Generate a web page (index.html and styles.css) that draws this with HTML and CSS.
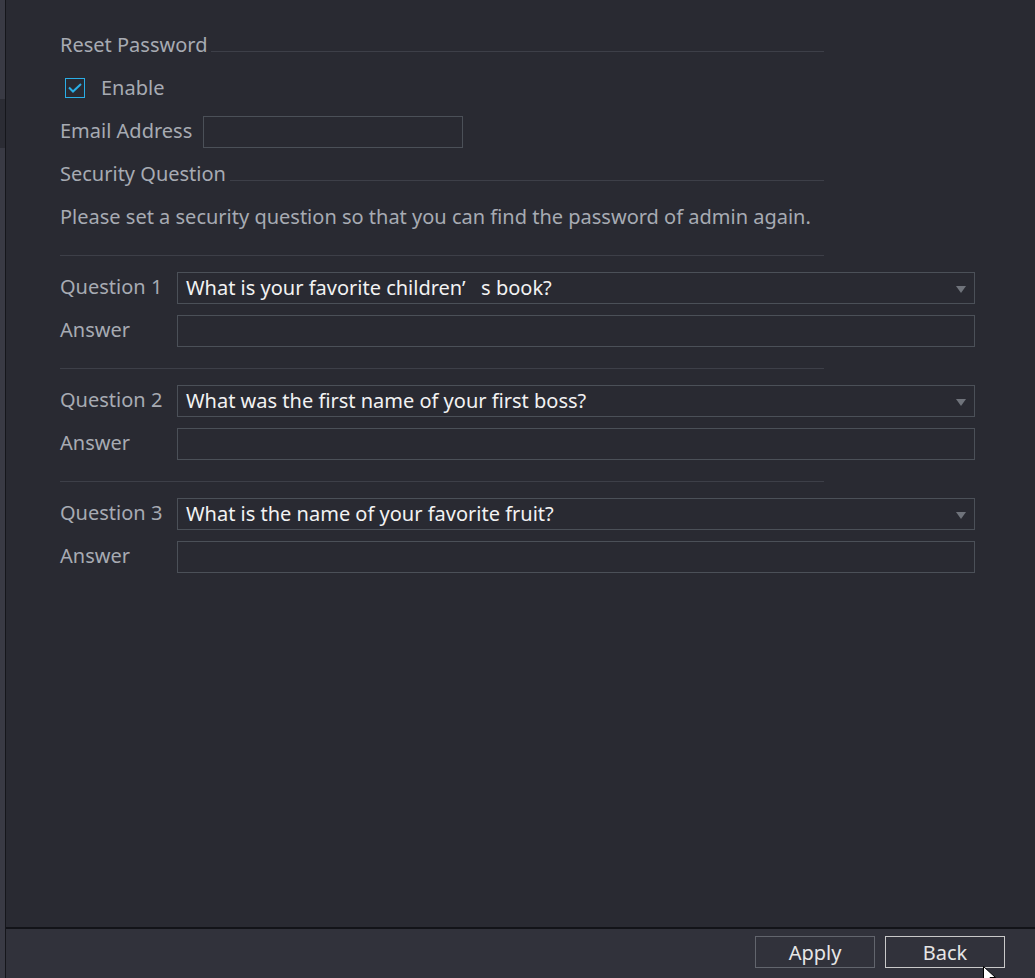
FILE: index.html
```
<!DOCTYPE html>
<html>
  <head>
    <title>Reset Password</title>
    <link rel="stylesheet" href="styles.css">
  </head>
  <body>
    <div class="screen">
      <div class="side-strip">
        <div class="strip-active"></div>
      </div>

      <div class="panel">
        <div class="content">
          <div class="section-title">
            <span>Reset Password</span>
            <div class="section-line"></div>
          </div>

          <div class="row">
            <label class="check">
              <span class="check-box">
                <svg width="14" height="10" viewBox="0 0 14 10" fill="none" stroke="#2aaee6" stroke-width="2">
                  <path d="M1 4.5l4 4L13 1"></path>
                </svg>
              </span>
              <span class="check-text">Enable</span>
            </label>
          </div>

          <div class="row">
            <span class="label">Email Address</span>
            <div class="text-box email-box"></div>
          </div>

          <div class="section-title">
            <span>Security Question</span>
            <div class="section-line"></div>
          </div>

          <div class="row">
            <span class="label">Please set a security question so that you can find the password of admin again.</span>
          </div>

          <div class="divider"></div>

          <div class="question-group">
            <div class="q-row">
              <span class="q-label">Question 1</span>
              <div class="select-box">
                <span>What is your favorite children’&nbsp;&nbsp;&nbsp;s book?</span>
                <span class="arrow"></span>
              </div>
            </div>
            <div class="q-row">
              <span class="q-label">Answer</span>
              <div class="text-box wide-box"></div>
            </div>
          </div>

          <div class="divider"></div>

          <div class="question-group">
            <div class="q-row">
              <span class="q-label">Question 2</span>
              <div class="select-box">
                <span>What was the first name of your first boss?</span>
                <span class="arrow"></span>
              </div>
            </div>
            <div class="q-row">
              <span class="q-label">Answer</span>
              <div class="text-box wide-box"></div>
            </div>
          </div>

          <div class="divider"></div>

          <div class="question-group">
            <div class="q-row">
              <span class="q-label">Question 3</span>
              <div class="select-box">
                <span>What is the name of your favorite fruit?</span>
                <span class="arrow"></span>
              </div>
            </div>
            <div class="q-row">
              <span class="q-label">Answer</span>
              <div class="text-box wide-box"></div>
            </div>
          </div>
        </div>

        <div class="footer">
          <button class="btn">Apply</button>
          <button class="btn btn-back">Back</button>
        </div>
      </div>
    </div>

    <svg class="cursor" width="13" height="20" viewBox="0 0 13 20">
      <path d="M0.5 0.5v16l4-4 3 6.5 2.5-1-3-6.5h5.5z" fill="#ffffff" stroke="#000000" stroke-width="1"></path>
    </svg>
  </body>
</html>
```

FILE: styles.css
```
body {
  margin: 0;
  width: 1035px;
  height: 978px;
  overflow: hidden;
  background-color: #292a32;
  font-family: "Noto Sans", "Open Sans", sans-serif;
  font-size: 20px;
  color: #a7abb3;
}
.screen {
  display: flex;
  height: 978px;
}
.side-strip {
  width: 5px;
  flex-shrink: 0;
  background-color: #393a44;
  border-right: 1px solid #15161b;
  padding-top: 99px;
}
.strip-active {
  height: 49px;
  background-color: #2b2c34;
}
.panel {
  flex: 1;
  display: flex;
  flex-direction: column;
}
.content {
  flex: 1;
  padding: 23px 0 0 54px;
}
.section-title {
  display: flex;
  align-items: center;
  height: 43px;
  width: 764px;
}
.section-title span {
  white-space: nowrap;
  margin-right: 4px;
}
.section-line {
  flex: 1;
  height: 1px;
  background-color: #3d3f48;
  margin-top: 14px;
}
.row {
  display: flex;
  align-items: center;
  height: 43px;
}
.label {
  white-space: nowrap;
  margin-right: 11px;
}
.check {
  display: flex;
  align-items: center;
  padding-left: 5px;
}
.check-box {
  width: 18px;
  height: 18px;
  border: 1px solid #2aaee6;
  display: flex;
  align-items: center;
  justify-content: center;
}
.check-text {
  margin-left: 16px;
}
.text-box {
  height: 30px;
  border: 1px solid #4b5058;
  box-sizing: content-box;
}
.email-box {
  width: 258px;
  margin-top: 2px;
}
.divider {
  width: 764px;
  height: 1px;
  background-color: #3d3f48;
  margin-top: 17px;
}
.question-group {
  padding: 16px 0 5px;
}
.q-row {
  display: flex;
  align-items: center;
  margin-bottom: 11px;
}
.q-label {
  width: 117px;
  flex-shrink: 0;
  white-space: nowrap;
  margin-bottom: 3px;
}
.wide-box {
  width: 796px;
}
.select-box {
  width: 788px;
  height: 28px;
  padding-bottom: 2px;
  border: 1px solid #4b5058;
  display: flex;
  align-items: center;
  justify-content: space-between;
  padding-left: 8px;
  color: #f2f2f2;
}
.arrow {
  width: 0;
  height: 0;
  border-left: 5px solid transparent;
  border-right: 5px solid transparent;
  border-top: 7px solid #6f737b;
  margin-right: 8px;
  margin-top: 4px;
}
.question-group + .divider {
  margin-top: 5px;
}
.footer {
  height: 51px;
  border-top: 2px solid #121318;
  background-color: #31323b;
  display: flex;
  justify-content: flex-end;
  padding: 7px 30px 0 0;
  gap: 10px;
  box-sizing: border-box;
}
.btn {
  width: 120px;
  height: 32px;
  background-color: transparent;
  border: 1px solid #62656d;
  color: #e6e6e6;
  font-family: "Noto Sans", "Open Sans", sans-serif;
  font-size: 20px;
  padding: 0;
}
.btn-back {
  border-color: #c9c9c9;
}
.cursor {
  position: absolute;
  left: 983px;
  top: 966px;
}
```
